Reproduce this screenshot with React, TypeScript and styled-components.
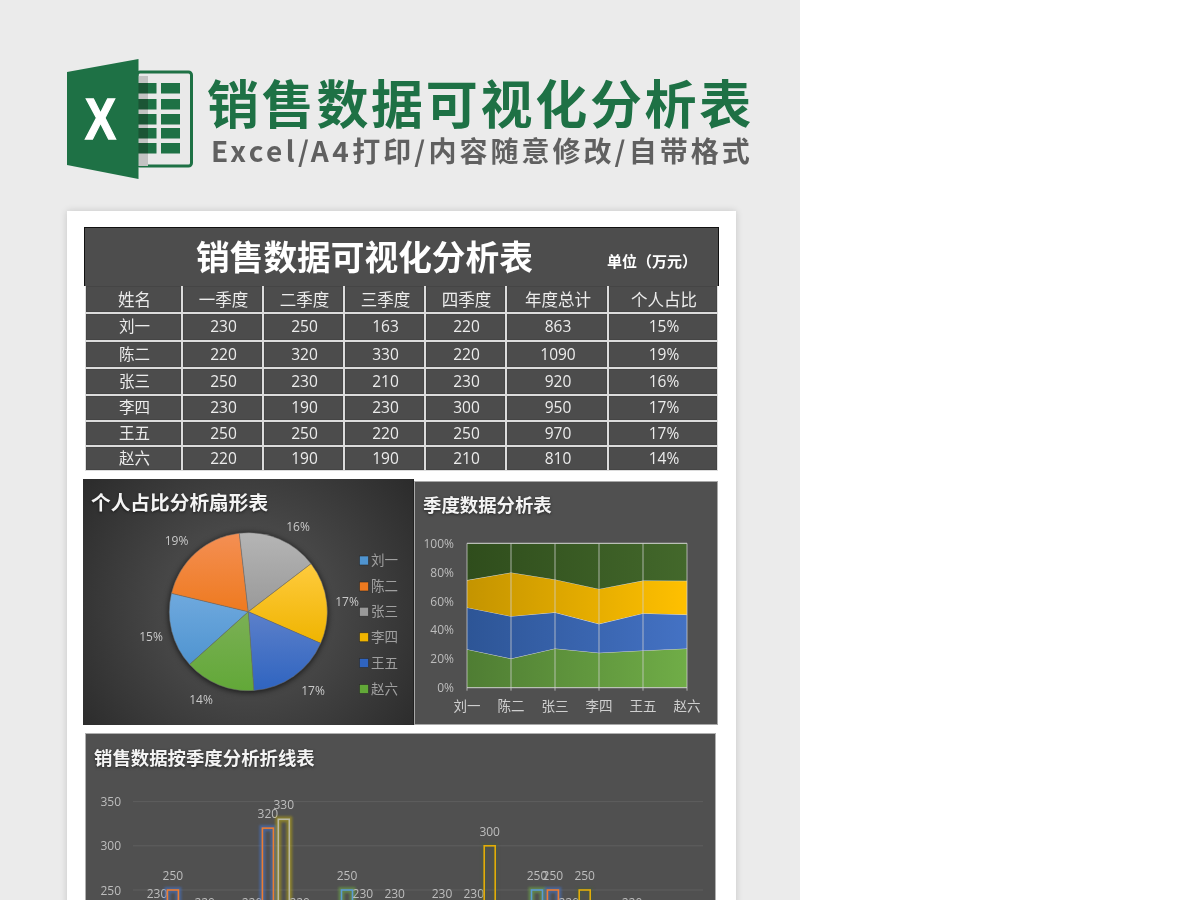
import React from "react";
import styled, { createGlobalStyle } from "styled-components";

const CJK = `"Open Sans", "Noto Sans CJK SC", sans-serif`;

const Global = createGlobalStyle`
  html, body { margin: 0; padding: 0; background: #fff; }
  body { font-family: ${CJK}; }
`;

const Page = styled.div`
  width: 800px;
  height: 900px;
  overflow: hidden;
  background: #ebebeb;
  filter: blur(0.35px);
`;

const Header = styled.header`
  display: flex;
  align-items: flex-start;
  gap: 14px;
  padding: 59px 0 0 67px;
  height: 120px;
`;

const HeaderText = styled.div`
  display: flex;
  flex-direction: column;
  margin-top: 10px;
`;

const MainTitle = styled.h1`
  margin: 0;
  font: 700 52px/66px "Noto Sans CJK SC", sans-serif;
  letter-spacing: 2.7px;
  color: #1e7145;
  white-space: nowrap;
`;

const SubTitle = styled.div`
  margin: -3px 0 0 4px;
  font: 700 28px/36px "Noto Sans CJK SC", sans-serif;
  letter-spacing: 3px;
  color: #606060;
  white-space: nowrap;
`;

const SubLatin = styled.span`
  letter-spacing: 3.4px;
`;

const Card = styled.main`
  width: 635px;
  height: 700px;
  margin: 32px 0 0 67px;
  padding: 16px 17px;
  background: #fff;
  box-shadow: 0 0 7px rgba(0, 0, 0, 0.16);
`;

const TitleBar = styled.div`
  display: flex;
  align-items: center;
  box-sizing: border-box;
  height: 59px;
  padding-left: 111px;
  background: #4d4d4d;
  border: 1.5px solid #111;
  border-bottom: 0;
  color: #fff;
`;

const BarTitle = styled.h2`
  margin: 0 0 2px;
  font: 700 33.7px/44px "Noto Sans CJK SC", sans-serif;
  white-space: nowrap;
`;

const Unit = styled.span`
  margin: 8px 0 0 74px;
  font: 700 15px/20px "Noto Sans CJK SC", sans-serif;
  white-space: nowrap;
`;

const Grid = styled.div`
  display: grid;
  grid-template-columns: 95px 79px 79px 79px 79px 100px 108px;
  grid-template-rows: 26px 26px 25px 25px 24px 23px 23px;
  gap: 2px;
  padding: 0 1px 1px;
  margin: 0 1px;
  background: #dcdcdc;
`;

const Cell = styled.div<{ $head?: boolean }>`
  display: flex;
  align-items: center;
  justify-content: center;
  padding: ${(p) => (p.$head ? "2px" : "0")} 0 0 2px;
  background: #4c4c4c;
  box-shadow: inset 0 0 0 1px #454545;
  color: #ececec;
  font-size: ${(p) => (p.$head ? "16.5px" : "15.5px")};
  line-height: 1;
`;

const ChartRow = styled.section`
  display: flex;
  align-items: flex-start;
  margin: 8px 0 0 -1px;
`;

const PiePanel = styled.div`
  width: 330px;
  height: 246px;
  background: radial-gradient(circle at 50% 52%, #5a5a5a 0%, #474747 40%, #2b2b2b 100%);
  border-right: 1px solid #202020;
`;

const AreaPanel = styled.div`
  box-sizing: border-box;
  width: 304px;
  height: 244px;
  margin-top: 2px;
  background: #505050;
  border: 1px solid #a8a8a8;
`;

const LinePanel = styled.div`
  box-sizing: border-box;
  width: 631px;
  height: 300px;
  margin: 8px 0 0 1px;
  background: #505050;
  border: 1px solid #b0b0b0;
`;

const PanelTitle = styled.h3<{ $h: number; $pl: number; $size: number }>`
  margin: 0;
  box-sizing: border-box;
  height: ${(p) => p.$h}px;
  padding-left: ${(p) => p.$pl}px;
  font: 700 ${(p) => p.$size}px/${(p) => p.$h}px "Noto Sans CJK SC", sans-serif;
  color: #f4f4f4;
  text-shadow: 0 1px 3px rgba(0, 0, 0, 0.55);
  white-space: nowrap;
`;

const ChartSvg = styled.svg`
  display: block;
  overflow: visible;
`;

const PieLabel = styled.text`
  font: 12px ${CJK};
  fill: #c9c9c9;
  text-anchor: middle;
  dominant-baseline: central;
`;

const LegendText = styled.text`
  font: 13.5px "Noto Sans CJK SC", sans-serif;
  fill: #a0a0a0;
  dominant-baseline: central;
`;

const AxisText = styled.text`
  font: 12px ${CJK};
  fill: #bdbdbd;
  dominant-baseline: central;
`;

const CatText = styled.text`
  font: 13.5px "Noto Sans CJK SC", sans-serif;
  fill: #cfcfcf;
  text-anchor: middle;
  dominant-baseline: central;
`;

const PieGroup = styled.g`
  filter: drop-shadow(0 1px 3px rgba(0, 0, 0, 0.75));
`;

const GlowRect = styled.rect`
  filter: blur(0.8px);
`;

const names = ["刘一", "陈二", "张三", "李四", "王五", "赵六"];
const quarters = [
  [230, 250, 163, 220],
  [220, 320, 330, 220],
  [250, 230, 210, 230],
  [230, 190, 230, 300],
  [250, 250, 220, 250],
  [220, 190, 190, 210],
];
const percents = ["15%", "19%", "16%", "17%", "17%", "14%"];
const sumOf = (a: number[]) => a.reduce((s, v) => s + v, 0);
const totals = quarters.map(sumOf);
const grand = sumOf(totals);

const head = ["姓名", "一季度", "二季度", "三季度", "四季度", "年度总计", "个人占比"];

function ExcelLogo() {
  const rows = [24, 40, 55, 69, 84];
  return (
    <svg width="126" height="120" viewBox="0 0 126 120" aria-hidden="true">
      <rect x="70" y="13" width="54.5" height="94" rx="3" fill="#e9e9e9" stroke="#1e7145" strokeWidth="3" />
      <rect x="71" y="17" width="10" height="90" fill="#c3c3c3" />
      {rows.map((y) => (
        <g key={y}>
          <rect x="71" y={y} width="10" height="10.5" fill="#1b5535" />
          <rect x="81" y={y} width="8.5" height="10.5" fill="#1e7145" />
          <rect x="94" y={y} width="19" height="10.5" fill="#1e7145" />
        </g>
      ))}
      <polygon points="0,13 71.5,0 71.5,120 0,106" fill="#1e7145" />
      <text
        x="18"
        y="80"
        fontFamily='"Liberation Sans", sans-serif'
        fontWeight="700"
        fontSize="58"
        fill="#fff"
        stroke="#fff"
        strokeWidth="1.4"
        textLength="31"
        lengthAdjust="spacingAndGlyphs"
      >
        X
      </text>
    </svg>
  );
}

const pieStops: [string, string][] = [
  ["#6fa9de", "#4f94d0"],
  ["#f48f54", "#ee7a1f"],
  ["#b5b5b5", "#999999"],
  ["#ffcb3e", "#efb400"],
  ["#5c80ca", "#2f64c0"],
  ["#7bb055", "#62a838"],
];
const legendY = [560.5, 586.5, 611.7, 637.3, 663, 689];
const pieLabelPos: [number, number][] = [
  [151, 636],
  [176.5, 540],
  [298, 526],
  [347, 601.5],
  [313, 690],
  [201, 699.6],
];

function PieChart() {
  const cx = 248.3;
  const cy = 611.7;
  const r = 79;
  let angle = -132;
  const slices = totals.map((t) => {
    const start = angle;
    angle += (t / grand) * 360;
    const a = (start * Math.PI) / 180;
    const b = (angle * Math.PI) / 180;
    const p = (v: number) => `${cx + r * Math.sin(v)} ${cy - r * Math.cos(v)}`;
    return `M${cx} ${cy}L${p(a)}A${r} ${r} 0 0 1 ${p(b)}Z`;
  });
  return (
    <ChartSvg width="330" height="200" viewBox="83 525 330 200">
      <defs>
        {pieStops.map(([a, b], i) => (
          <linearGradient key={i} id={`pie${i}`} x1="0" y1="0" x2="0" y2="1">
            <stop offset="0" stopColor={a} />
            <stop offset="1" stopColor={b} />
          </linearGradient>
        ))}
      </defs>
      <PieGroup>
        {slices.map((d, i) => (
          <path key={i} d={d} fill={`url(#pie${i})`} stroke="#6f6f6f" strokeWidth="0.5" />
        ))}
      </PieGroup>
      {percents.map((t, i) => (
        <PieLabel key={i} x={pieLabelPos[i][0]} y={pieLabelPos[i][1]}>
          {t}
        </PieLabel>
      ))}
      {names.map((n, i) => (
        <g key={n}>
          <rect x="359.5" y={legendY[i] - 4.5} width="9" height="9" fill={pieStops[i][1]} stroke="#2a2a2a" strokeWidth="0.6" />
          <LegendText x="371" y={legendY[i] - 1.5}>
            {n}
          </LegendText>
        </g>
      ))}
    </ChartSvg>
  );
}

const areaFills: [string, string][] = [
  ["#4f7d33", "#70ad47"],
  ["#2d5596", "#4472c4"],
  ["#c49400", "#ffc000"],
  ["#2f4d1c", "#43682b"],
];

function AreaChart() {
  const xs = [467, 511, 555, 599, 643, 687];
  const y0 = 687.7;
  const h = 144.4;
  const yOf = (pct: number) => y0 - (h * pct) / 100;
  const layers = [0, 1, 2, 3].map((q) =>
    quarters.map((row, i) => (sumOf(row.slice(0, q + 1)) / totals[i]) * 100)
  );
  const base = [new Array(6).fill(0), ...layers];
  return (
    <ChartSvg width="302" height="198" viewBox="415 526 302 198">
      <defs>
        {areaFills.map(([a, b], i) => (
          <linearGradient key={i} id={`area${i}`} x1="0" y1="0" x2="1" y2="0">
            <stop offset="0" stopColor={a} />
            <stop offset="1" stopColor={b} />
          </linearGradient>
        ))}
      </defs>
      {layers.map((top, q) => {
        const up = top.map((v, i) => `${xs[i]},${yOf(v)}`);
        const down = base[q].map((v: number, i: number) => `${xs[i]},${yOf(v)}`).reverse();
        return (
          <g key={q}>
            <polygon points={[...up, ...down].join(" ")} fill={`url(#area${q})`} />
            <polyline points={up.join(" ")} fill="none" stroke="#d9d9d9" strokeWidth="1" />
          </g>
        );
      })}
      {xs.map((x) => (
        <line key={x} x1={x} x2={x} y1={yOf(100)} y2={y0 + 3} stroke="#d0d0d0" strokeOpacity="0.75" strokeWidth="1" />
      ))}
      <line x1={467} x2={687} y1={y0} y2={y0} stroke="#d0d0d0" strokeWidth="1" />
      {[0, 20, 40, 60, 80, 100].map((v) => (
        <AxisText key={v} x="454" y={yOf(v)} textAnchor="end">
          {v}%
        </AxisText>
      ))}
      {names.map((n, i) => (
        <CatText key={n} x={xs[i]} y="705">
          {n}
        </CatText>
      ))}
    </ChartSvg>
  );
}

const barStyles = [
  { stroke: "#5b9bd5", glow: "#70ad47", op: 0.55 },
  { stroke: "#ed7d31", glow: "#4472c4", op: 0.6 },
  { stroke: "#b9b9a6", glow: "#c9b400", op: 0.45 },
  { stroke: "#e3ac08", glow: "#43682b", op: 0.25 },
];

function BarChart() {
  const yOf = (v: number) => 890 - (v - 250) * 0.884;
  return (
    <ChartSvg width="629" height="119" viewBox="86 781 629 119">
      {[350, 300, 250].map((v) => (
        <g key={v}>
          <line x1="133" x2="703" y1={yOf(v)} y2={yOf(v)} stroke="#5e5e5e" strokeWidth="1" />
          <AxisText x="121" y={yOf(v)} textAnchor="end">
            {v}
          </AxisText>
        </g>
      ))}
      {quarters.map((row, i) =>
        row.map((v, q) => {
          const x = 157 + i * 95 + q * 15.9;
          const y = yOf(v);
          const s = barStyles[q];
          return (
            <g key={`${i}-${q}`}>
              <GlowRect x={x - 5.5} y={y} width="11" height={1000 - y} fill="none" stroke={s.glow} strokeOpacity={s.op} strokeWidth="6" />
              <rect x={x - 5.5} y={y} width="11" height={1000 - y} fill="none" stroke={s.stroke} strokeWidth="1.6" />
              <AxisText x={x} y={y - 14.5} textAnchor="middle">
                {v}
              </AxisText>
            </g>
          );
        })
      )}
    </ChartSvg>
  );
}

export default function App() {
  return (
    <Page>
      <Global />
      <Header>
        <ExcelLogo />
        <HeaderText>
          <MainTitle>销售数据可视化分析表</MainTitle>
          <SubTitle>
            <SubLatin>Excel/A4</SubLatin>打印<SubLatin>/</SubLatin>内容随意修改<SubLatin>/</SubLatin>自带格式
          </SubTitle>
        </HeaderText>
      </Header>
      <Card>
        <TitleBar>
          <BarTitle>销售数据可视化分析表</BarTitle>
          <Unit>单位（万元）</Unit>
        </TitleBar>
        <Grid>
          {head.map((h) => (
            <Cell $head key={h}>
              {h}
            </Cell>
          ))}
          {names.map((n, i) => (
            <React.Fragment key={n}>
              <Cell>{n}</Cell>
              {quarters[i].map((v, q) => (
                <Cell key={q}>{v}</Cell>
              ))}
              <Cell>{totals[i]}</Cell>
              <Cell>{percents[i]}</Cell>
            </React.Fragment>
          ))}
        </Grid>
        <ChartRow>
          <PiePanel>
            <PanelTitle $h={46} $pl={8} $size={19.7}>个人占比分析扇形表</PanelTitle>
            <PieChart />
          </PiePanel>
          <AreaPanel>
            <PanelTitle $h={44} $pl={8} $size={18.4}>季度数据分析表</PanelTitle>
            <AreaChart />
          </AreaPanel>
        </ChartRow>
        <LinePanel>
          <PanelTitle $h={47} $pl={8} $size={18.4}>销售数据按季度分析折线表</PanelTitle>
          <BarChart />
        </LinePanel>
      </Card>
    </Page>
  );
}
